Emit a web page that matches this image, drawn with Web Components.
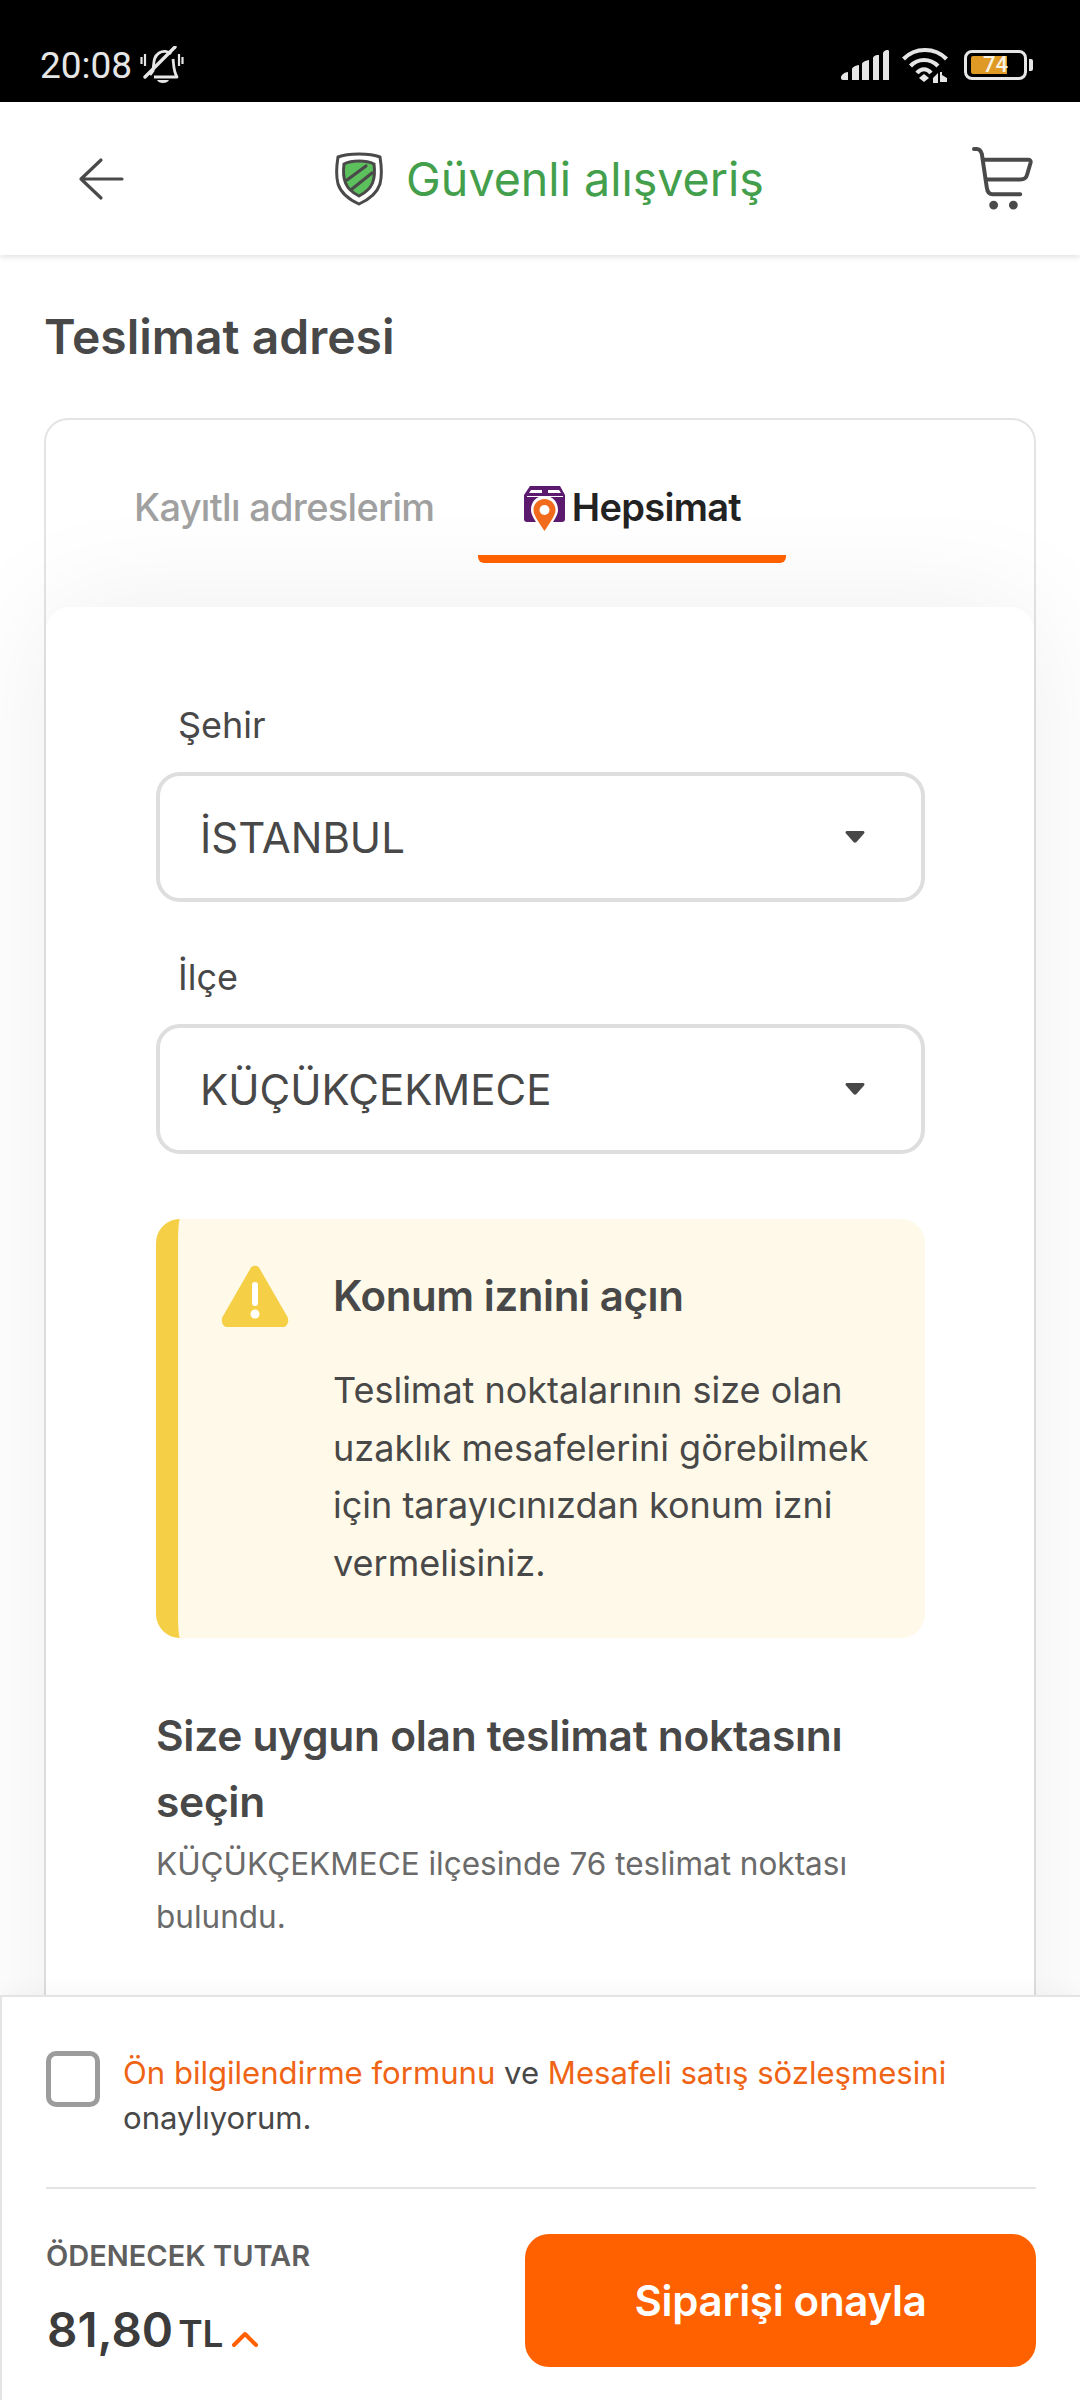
<!DOCTYPE html>
<html lang="tr">
<head>
<meta charset="utf-8">
<title>Teslimat adresi</title>
<style>
  html, body { margin: 0; padding: 0; background: #fff; }
  body { font-family: Inter, "Liberation Sans", sans-serif; color: #484848; }
  #page { display: flex; flex-direction: column; width: 1080px; height: 2400px; overflow: hidden; }
</style>
</head>
<body>
<div id="page">
  <status-bar></status-bar>
  <app-header></app-header>
  <address-view>
    <tab-bar></tab-bar>
    <select-field label="Şehir" value="İSTANBUL"></select-field>
    <select-field label="İlçe" value="KÜÇÜKÇEKMECE"></select-field>
    <alert-box title="Konum iznini açın">Teslimat noktalarının size olan uzaklık mesafelerini görebilmek için tarayıcınızdan konum izni vermelisiniz.</alert-box>
    <point-intro></point-intro>
  </address-view>
  <checkout-footer></checkout-footer>
</div>

<script>
class StatusBar extends HTMLElement {
  constructor() {
    super();
    this.attachShadow({ mode: "open" }).innerHTML = `
      <style>
        :host { display: flex; flex: none; height: 102px; background: #000; color: #e6e6e6; align-items: center; justify-content: space-between; padding: 28px 47px 0 40px; box-sizing: border-box; font: 400 37px Roboto, sans-serif; }
        .left, .right { display: flex; align-items: center; }
        .left { gap: 8px; }
        svg { display: block; }
        .battery { position: relative; width: 63px; height: 30px; box-sizing: border-box; border: 3px solid #e6e6e6; border-radius: 8px; }
        .fill { position: absolute; left: 4px; top: 3px; bottom: 3px; width: 36px; background: #df9a26; border-radius: 2px 0 0 2px; }
        .level { position: absolute; left: 16px; top: 0; font: 500 22px/24px Roboto, sans-serif; color: #f8f2e2; }
        .nub { width: 4px; height: 12px; margin-left: 2px; background: #e6e6e6; border-radius: 0 2px 2px 0; }
      </style>
      <div class="left">
        <span>20:08</span>
        <svg width="44" height="38" viewBox="0 0 44 38" fill="none" stroke="#e6e6e6">
          <path d="M10 29 13 25C14 17 13 11 19 7 23 4.500 28 5 31 8M33 13C34 19 33 24 37 31H14" stroke-width="2.800" stroke-linejoin="round"/>
          <path d="M5 31 35 1" stroke-width="3.400" stroke-linecap="round"/>
          <path d="M17 34h12c-1 2-3 3-6 3s-5-1-6-3z" fill="#e6e6e6" stroke="none"/>
          <path d="M1.500 11v7M5 8v12M39 8v12M42.500 11v7" stroke-width="2.200"/>
        </svg>
      </div>
      <div class="right">
        <svg width="48" height="30" viewBox="0 0 48 30" fill="#e6e6e6">
          <path d="M0 27C0 25 4 22 7 22V30H2C.8 30 0 29.200 0 28Z"/>
          <path d="M11 19C11 17.500 14 15.500 18 15V30H11Z"/>
          <path d="M21 14C21 12.500 24 10.500 28 10V30H21Z"/>
          <path d="M32 8C32 6.500 35 4.500 38 5V30H32Z"/>
          <path d="M42 3.500C42 1.500 44.500 0 46.500 0 47.500 0 48 .5 48 1.500V30H42Z"/>
        </svg>
        <svg width="46" height="36" viewBox="0 0 46 36" fill="none" stroke="#e6e6e6" stroke-width="4.200" style="margin:0 16px 0 13px">
          <path d="M1.500 12C13 0 33 0 44.500 12"/>
          <path d="M8.500 19C16 11 28 11 36 19"/>
          <path d="M15 26C19 21 25 21 29 26"/>
          <path d="M17 31l5-4 5 4-5 4z" fill="#e6e6e6" stroke="none"/>
          <path d="M31 31l5-5v10h-5zM38 25l2 0v3l5 3v4h-7z" fill="#e6e6e6" stroke="none"/>
        </svg>
        <div class="battery"><div class="fill"></div><span class="level">74</span></div>
        <div class="nub"></div>
      </div>`;
  }
}

class AppHeader extends HTMLElement {
  constructor() {
    super();
    this.attachShadow({ mode: "open" }).innerHTML = `
      <style>
        :host { display: flex; flex: none; position: relative; z-index: 2; height: 153px; background: #fff; align-items: center; justify-content: space-between; padding: 0 44px 0 78px; box-sizing: border-box; box-shadow: 0 2px 6px rgba(0,0,0,.12); }
        .title { display: flex; align-items: center; gap: 23px; color: #449f4c; font-size: 46.600px; margin-left: 4px; }
        svg { display: block; }
      </style>
      <svg width="46" height="44" viewBox="0 0 46 44" fill="none" stroke="#4a4a4a" stroke-width="3.200" stroke-linecap="round" stroke-linejoin="round">
        <path d="M23 3 3 22 23 41M3 22H44"/>
      </svg>
      <div class="title">
        <svg width="48" height="54" viewBox="0 0 48 54" fill="none">
          <path d="M24 2C16 2 8 3 3 5 1.500 14 1 24 3 32 6 41 15 48 24 52 33 48 42 41 45 32 47 24 46.500 14 45 5 40 3 32 2 24 2Z" stroke="#4a4a4a" stroke-width="3"/>
          <path d="M24 10C19 10 14 11 10 12 9 19 9 26 11 31 13 37 18 41 24 44 30 41 35 37 37 31 39 26 39 19 38 12 34 11 29 10 24 10Z" fill="#5cc15d"/>
          <path d="M9 12C14 9.500 19 9 24 9 29 9 34 9.500 39 12 40 20 39.500 26 37.500 31 35 37 30 41 24 44 18 41 13 37 10.500 31 8.500 26 8 20 9 12Z" stroke="#4a4a4a" stroke-width="3"/>
          <path d="M12 28 31 14M17 37 37 21" stroke="#4a4a4a" stroke-width="3.200" stroke-linecap="round"/>
        </svg>
        <span>Güvenli alışveriş</span>
      </div>
      <svg width="65" height="65" viewBox="0 0 66 66" fill="none" stroke="#4a4a4a" stroke-width="4" stroke-linecap="round" stroke-linejoin="round">
        <path d="M3 3H6C9 3 10 5 11 8L16 42C16.500 46 18 49 22 49H50"/>
        <path d="M12 14H58C60 14 61 15 60.500 17L57 29C56 33 54 34 50 34H15"/>
        <circle cx="23" cy="60" r="2.500" fill="#4a4a4a"/>
        <circle cx="43" cy="60" r="2.500" fill="#4a4a4a"/>
      </svg>`;
  }
}

class TabBar extends HTMLElement {
  constructor() {
    super();
    this.attachShadow({ mode: "open" }).innerHTML = `
      <style>
        :host { display: flex; flex: none; height: 143px; margin-bottom: 44px; box-sizing: border-box; font-size: 38px; letter-spacing: -.7px; align-items: stretch; padding-left: 88px; }
        .tab { display: flex; align-items: center; color: #a0a0a0; font-weight: 500; padding-top: 31px; }
        .active { position: relative; color: #222; font-weight: 600; margin-left: 44px; width: 308px; justify-content: center; gap: 6px; box-sizing: border-box; }
        .active::after { content: ""; position: absolute; left: 0; right: 0; bottom: 0; height: 8px; background: #ff6000; border-radius: 0 0 6px 6px; }
        svg { display: block; margin-top: 6px; }
      </style>
      <div class="tab">Kayıtlı adreslerim</div>
      <div class="tab active">
        <svg width="42" height="48" viewBox="0 0 42 48">
          <path d="M6 0H36L41 9V33C41 35 40 36 38 36H3C1 36 0 35 0 33V9Z" fill="#5c1a6e"/>
          <path d="M7 4H18V7H5ZM24 4H35L37 7H24ZM3 10H39V11H3Z" fill="#fff"/>
          <path d="M20.500 10C12 10 7 16 7 24 7 30 12 36 20.500 48 29 36 34 30 34 24 34 16 29 10 20.500 10Z" fill="#fff"/>
          <path d="M20.500 13C14 13 9.500 18 9.500 24 9.500 29 14 35 20.500 45 27 35 31.500 29 31.500 24 31.500 18 27 13 20.500 13Z" fill="#f26a1b"/>
          <circle cx="20.500" cy="24" r="5" fill="#fff"/>
        </svg>
        <span>Hepsimat</span>
      </div>`;
  }
}

class SelectField extends HTMLElement {
  static get observedAttributes() { return ["label", "value"]; }
  constructor() {
    super();
    this.shadowDOM = this.attachShadow({ mode: "open" });
  }
  connectedCallback() { this.render(); }
  attributeChangedCallback() { this.render(); }
  render() {
    this.shadowDOM.innerHTML = `
      <style>
        :host { display: block; font-size: 36px; color: #484848; }
        label { display: block; height: 44px; line-height: 44px; margin: 0 0 25px 22px; }
        .box { display: flex; align-items: center; justify-content: space-between; height: 130px; box-sizing: border-box; border: 4px solid #dedede; border-radius: 24px; padding: 0 56px 0 40px; font-size: 42px; background: #fff; }
        svg { display: block; }
      </style>
      <label>${this.getAttribute("label") || ""}</label>
      <div class="box">
        <span>${this.getAttribute("value") || ""}</span>
        <svg width="20" height="12" viewBox="0 0 20 12"><path d="M2 0H18C19.500 0 20 1.500 19 2.500L11.500 11C10.500 12 9.500 12 8.500 11L1 2.500C0 1.500.5 0 2 0Z" fill="#484848"/></svg>
      </div>`;
  }
}

class AlertBox extends HTMLElement {
  constructor() {
    super();
    this.attachShadow({ mode: "open" }).innerHTML = `
      <style>
        :host { display: flex; height: 419px; box-sizing: border-box; border-left: 22px solid #f5cf45; background: #fef9e9; border-radius: 24px; padding: 45px 40px 0 43px; gap: 44px; }
        svg { display: block; flex: none; }
        h3 { margin: 0 0 34px; font-size: 42px; line-height: 64px; font-weight: 600; color: #484848; letter-spacing: -.4px; }
        p { margin: 0; font-size: 36px; line-height: 57.600px; color: #484848; }
      </style>
      <svg width="68" height="64" viewBox="0 0 68 64">
        <path d="M30 3.500C32 1 36 1 38 3.500L66.500 53C68.500 57 66 63 62 63H6C2 63-.5 57 1.500 53Z" fill="#f5cf45"/>
        <rect x="31" y="18" width="6" height="24" rx="3" fill="#fff"/>
        <circle cx="34" cy="50" r="4.500" fill="#fff"/>
      </svg>
      <div>
        <h3>${this.getAttribute("title") || ""}</h3>
        <p><slot></slot></p>
      </div>`;
  }
}

class PointIntro extends HTMLElement {
  constructor() {
    super();
    this.attachShadow({ mode: "open" }).innerHTML = `
      <style>
        :host { display: block; }
        h2 { margin: 0 0 2px; font-size: 42.500px; line-height: 66px; font-weight: 600; color: #484848; letter-spacing: -.3px; }
        p { margin: 0; font-size: 31.500px; line-height: 53px; color: #6a6a6a; }
      </style>
      <h2>Size uygun olan teslimat noktasını seçin</h2>
      <p>KÜÇÜKÇEKMECE ilçesinde 76 teslimat noktası bulundu.</p>`;
  }
}

class AddressView extends HTMLElement {
  constructor() {
    super();
    this.attachShadow({ mode: "open" }).innerHTML = `
      <style>
        :host { display: block; flex: 1; min-height: 0; overflow: hidden; padding: 0 44px; }
        h1 { margin: 0; padding: 52px 0; height: 59px; font-size: 48px; line-height: 60px; font-weight: 600; color: #484848; }
        .card { border: 2px solid #e4e4e4; border-bottom: 0; border-radius: 24px 24px 0 0; height: 1600px; }
        .inner { background: #fff; border-radius: 24px 24px 0 0; padding: 96px 109px 0 110px; display: flex; flex-direction: column; height: 1500px; box-sizing: border-box; box-shadow: 0 0 120px rgba(0,0,0,.07); }
        .inner ::slotted(select-field) { margin-bottom: 53px; }
        .inner ::slotted(alert-box) { margin-top: 12px; margin-bottom: 65px; }
      </style>
      <h1>Teslimat adresi</h1>
      <div class="card">
        <slot name="tabs"></slot>
        <div class="inner"><slot></slot></div>
      </div>`;
    this.querySelector("tab-bar").slot = "tabs";
  }
}

class CheckoutFooter extends HTMLElement {
  constructor() {
    super();
    this.attachShadow({ mode: "open" }).innerHTML = `
      <style>
        :host { display: block; flex: none; height: 405px; box-sizing: border-box; position: relative; z-index: 2; background: #fff; border: 2px solid #e4e4e4; border-bottom: 0; border-right: 0; padding: 0 44px; box-shadow: 0 -2px 24px rgba(0,0,0,.04); }
        .agree { display: flex; height: 192px; box-sizing: border-box; padding-top: 54px; border-bottom: 2px solid #e4e4e4; gap: 23px; font-size: 31.100px; line-height: 45px; color: #484848; }
        .check { flex: none; width: 54px; height: 56px; box-sizing: border-box; border: 5px solid #9c9c9c; border-radius: 10px; }
        .agree p { margin: 0; }
        a { color: #ef6414; text-decoration: none; }
        .pay { display: flex; justify-content: space-between; align-items: flex-start; padding-top: 45px; }
        .label { font-size: 29px; line-height: 44px; font-weight: 600; color: #5f5f5f; }
        .total { display: flex; align-items: baseline; margin-top: 22px; padding-left: 1px; color: #3c3c3c; font-weight: 600; font-size: 37px; gap: 5px; }
        .total b { font-size: 47.500px; font-weight: 600; line-height: 60px; }
        .total svg { margin: 0 0 4px 3px; }
        .btn { display: flex; align-items: center; justify-content: center; width: 511px; height: 133px; background: #ff6000; color: #fff; border-radius: 24px; font-size: 42px; font-weight: 600; letter-spacing: -.3px; }
      </style>
      <div class="agree">
        <div class="check"></div>
        <p><a>Ön bilgilendirme formunu</a> ve <a>Mesafeli satış sözleşmesini</a> onaylıyorum.</p>
      </div>
      <div class="pay">
        <div>
          <div class="label">ÖDENECEK TUTAR</div>
          <div class="total"><b>81,80</b><span>TL</span>
            <svg width="26" height="16" viewBox="0 0 26 16" fill="none" stroke="#ff6000" stroke-width="4" stroke-linecap="round" stroke-linejoin="round"><path d="M2 14 13 3 24 14"/></svg>
          </div>
        </div>
        <div class="btn">Siparişi onayla</div>
      </div>`;
  }
}

customElements.define("status-bar", StatusBar);
customElements.define("app-header", AppHeader);
customElements.define("tab-bar", TabBar);
customElements.define("select-field", SelectField);
customElements.define("alert-box", AlertBox);
customElements.define("point-intro", PointIntro);
customElements.define("address-view", AddressView);
customElements.define("checkout-footer", CheckoutFooter);
</script>
</body>
</html>
